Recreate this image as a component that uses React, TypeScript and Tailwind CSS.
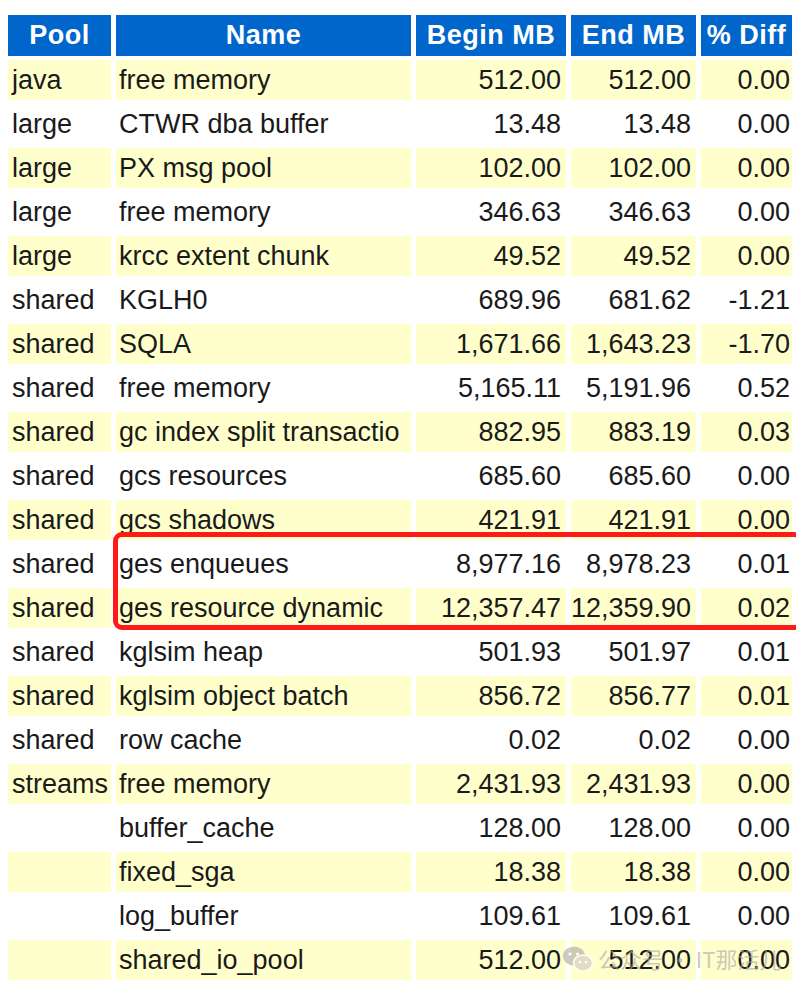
import React from "react";

type Row = [string, string, string, string, string];

const rows: Row[] = [
  ["java", "free memory", "512.00", "512.00", "0.00"],
  ["large", "CTWR dba buffer", "13.48", "13.48", "0.00"],
  ["large", "PX msg pool", "102.00", "102.00", "0.00"],
  ["large", "free memory", "346.63", "346.63", "0.00"],
  ["large", "krcc extent chunk", "49.52", "49.52", "0.00"],
  ["shared", "KGLH0", "689.96", "681.62", "-1.21"],
  ["shared", "SQLA", "1,671.66", "1,643.23", "-1.70"],
  ["shared", "free memory", "5,165.11", "5,191.96", "0.52"],
  ["shared", "gc index split transactio", "882.95", "883.19", "0.03"],
  ["shared", "gcs resources", "685.60", "685.60", "0.00"],
  ["shared", "gcs shadows", "421.91", "421.91", "0.00"],
  ["shared", "ges enqueues", "8,977.16", "8,978.23", "0.01"],
  ["shared", "ges resource dynamic", "12,357.47", "12,359.90", "0.02"],
  ["shared", "kglsim heap", "501.93", "501.97", "0.01"],
  ["shared", "kglsim object batch", "856.72", "856.77", "0.01"],
  ["shared", "row cache", "0.02", "0.02", "0.00"],
  ["streams", "free memory", "2,431.93", "2,431.93", "0.00"],
  ["", "buffer_cache", "128.00", "128.00", "0.00"],
  ["", "fixed_sga", "18.38", "18.38", "0.00"],
  ["", "log_buffer", "109.61", "109.61", "0.00"],
  ["", "shared_io_pool", "512.00", "512.00", "0.00"],
];

const headers = ["Pool", "Name", "Begin MB", "End MB", "% Diff"];

export default function App() {
  return (
    <div className="relative w-[796px] h-[985px] overflow-hidden bg-white font-['Liberation_Sans',Arial,sans-serif] text-[#1a1a1a]">
      <div className="pt-[15px] pl-[8px]">
        <div className="grid grid-cols-[103px_295px_150px_125px_91px] gap-x-[5px] gap-y-[4px]">
          {headers.map((h) => (
            <div
              key={h}
              className="h-[41px] bg-[#0066cc] text-white font-bold text-[27px] tracking-[0.5px] flex items-center justify-center whitespace-nowrap overflow-hidden"
            >
              {h}
            </div>
          ))}
          {rows.map((r, i) => {
            const bg = i % 2 === 0 ? "bg-[#ffffcc]" : "bg-white";
            return (
              <React.Fragment key={i}>
                <div className={`${bg} h-[40px] pl-[4px] text-[27px] flex items-center whitespace-nowrap overflow-hidden`}>
                  {r[0]}
                </div>
                <div className={`${bg} h-[40px] pl-[3px] text-[27px] flex items-center whitespace-nowrap overflow-hidden`}>
                  {r[1]}
                </div>
                <div className={`${bg} h-[40px] pr-[5px] text-[27px] flex items-center justify-end whitespace-nowrap overflow-hidden`}>
                  {r[2]}
                </div>
                <div className={`${bg} h-[40px] pr-[5px] text-[27px] flex items-center justify-end whitespace-nowrap overflow-hidden`}>
                  {r[3]}
                </div>
                <div className={`${bg} h-[40px] pr-[2px] text-[27px] flex items-center justify-end whitespace-nowrap overflow-hidden`}>
                  {r[4]}
                </div>
              </React.Fragment>
            );
          })}
        </div>
      </div>

      {/* red highlight box */}
      <div className="absolute left-[113px] top-[532px] w-[690px] h-[98px] border-[5px] border-[#ff1a1a] rounded-[9px]" />

      {/* watermark */}
      <div className="absolute left-[562px] top-[942px] flex items-center gap-[4px] opacity-60">
        <svg width="32" height="28" viewBox="0 0 32 28">
          <ellipse cx="12" cy="11" rx="11" ry="9.5" fill="#a8a8a8" />
          <circle cx="8" cy="9" r="1.6" fill="#fff" />
          <circle cx="15.5" cy="9" r="1.6" fill="#fff" />
          <ellipse cx="21" cy="18" rx="9.5" ry="8" fill="#c8c8c8" stroke="#fff" strokeWidth="1.5" />
          <circle cx="18" cy="17" r="1.3" fill="#fff" />
          <circle cx="24" cy="17" r="1.3" fill="#fff" />
        </svg>
        <span className="text-[22px] text-[#a8a8a8] font-['Noto_Sans_CJK_SC',sans-serif] whitespace-nowrap">
          公众号 · IT那活儿
        </span>
      </div>
    </div>
  );
}
